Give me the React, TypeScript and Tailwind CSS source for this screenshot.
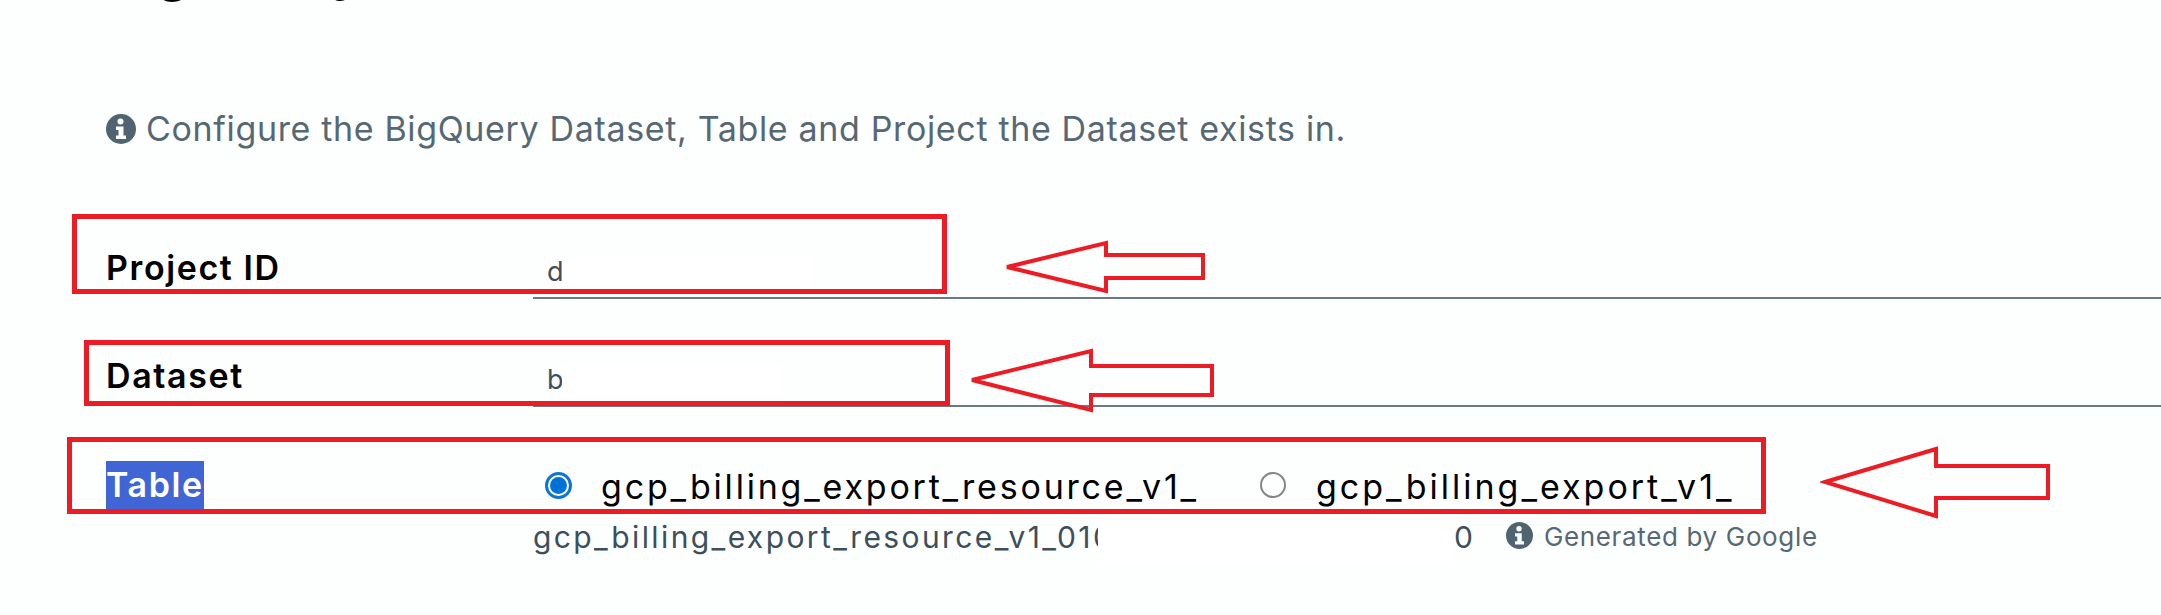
const FONT = "font-['Inter',sans-serif]";

function InfoIcon({ className }: { className: string }) {
  return (
    <svg viewBox="0 0 30 30" className={className}>
      <circle cx="15" cy="15" r="15" fill="#4f6370" />
      <circle cx="14.5" cy="7.5" r="3" fill="#fdfefe" />
      <path d="M10 12.5h7.5v9H20v3.5H10v-3.5h2.5v-5.5H10z" fill="#fdfefe" />
    </svg>
  );
}

function Arrow({ className, points }: { className: string; points: string }) {
  return (
    <svg className={`absolute ${className}`} fill="none">
      <polygon points={points} stroke="#ed1c24" strokeWidth="4" />
    </svg>
  );
}

function FormRow({ label, value, patch, className }: { label: string; value: string; patch: string; className: string }) {
  return (
    <div className={`flex pl-[106px] ${className}`}>
      <div className="w-[427px] text-[34px] font-semibold leading-[40px] tracking-[1.6px] text-black">{label}</div>
      <div className="flex flex-1 items-start border-b-2 border-[#697a84] pl-[14px]">
        <span className="mt-[4px] w-[15px] overflow-hidden text-[27px] leading-[40px] text-[#3f505b]">{value}</span>
        <span className={`mt-[9px] h-[32px] bg-white ${patch}`} />
      </div>
    </div>
  );
}

export default function App() {
  return (
    <div className={`relative h-[615px] w-[2161px] overflow-hidden bg-[#fdfefe] ${FONT}`}>
      <div className="-mt-[59px] pl-[106px] text-[54px] font-semibold leading-[60px] text-black">Big Query</div>

      <div className="mt-[106px] flex items-center pl-[106px]">
        <InfoIcon className="h-[30px] w-[30px]" />
        <span className="ml-[10px] text-[34px] leading-[44px] tracking-[0.65px] text-[#566874]">
          Configure the BigQuery Dataset, Table and Project the Dataset exists in.
        </span>
      </div>

      <FormRow label="Project ID" value="d" patch="w-[250px]" className="mt-[97px] h-[51px]" />
      <FormRow label="Dataset" value="b" patch="w-[220px]" className="mt-[57px] h-[51px]" />

      <div className="mt-[53px] flex h-[50px] items-center pl-[106px]">
        <div className="w-[427px]">
          <span className="inline-block h-[48px] w-[98px] bg-[#3f66d4] text-[34px] font-semibold leading-[48px] tracking-[1.6px] text-white">Table</span>
        </div>
        <span className="ml-[12px] flex h-[27px] w-[27px] items-center justify-center rounded-full border-[3px] border-[#0f75d2]">
          <span className="h-[17px] w-[17px] rounded-full bg-[#0072d6]" />
        </span>
        <span className="ml-[29px] w-[659px] pt-[3px] text-[34px] leading-[44px] tracking-[2.8px] text-black">gcp_billing_export_resource_v1_</span>
        <span className="h-[26px] w-[26px] rounded-full border-2 border-[#858585]" />
        <span className="ml-[30px] pt-[3px] text-[34px] leading-[44px] tracking-[3px] text-black">gcp_billing_export_v1_</span>
      </div>

      <div className="mt-[9px] flex h-[36px] items-center pl-[533px]">
        <div className="w-[565px] overflow-hidden whitespace-nowrap text-[30px] leading-[36px] tracking-[2.4px] text-[#3c4f5b]">gcp_billing_export_resource_v1_010</div>
        <span className="h-[46px] w-[356px] translate-y-[6px] bg-white" />
        <span className="text-[30px] leading-[36px] text-[#3c4f5b]">0</span>
        <InfoIcon className="ml-[33px] h-[27px] w-[27px] -translate-y-[2px]" />
        <span className="ml-[11px] text-[26px] leading-[36px] tracking-[0.65px] text-[#566874]">Generated by Google</span>
      </div>

      {/* annotations drawn over the screenshot */}
      <div className="absolute left-[72px] top-[214px] h-[80px] w-[875px] border-[5px] border-[#ed1c24]" />
      <div className="absolute left-[84px] top-[340px] h-[66px] w-[866px] border-[5px] border-[#ed1c24]" />
      <div className="absolute left-[67px] top-[437px] h-[77px] w-[1699px] border-[5px] border-[#ed1c24]" />
      <Arrow className="left-[1000px] top-[236px] h-[62px] w-[210px]" points="7,31 106,7 106,19 203,19 203,42 106,42 106,55" />
      <Arrow className="left-[966px] top-[345px] h-[70px] w-[250px]" points="6,35 125,6 125,21 246,21 246,50 125,50 125,65" />
      <Arrow className="left-[1820px] top-[444px] h-[78px] w-[232px]" points="5,38 116,5 116,22 228,22 228,54 116,54 116,72" />
    </div>
  );
}
